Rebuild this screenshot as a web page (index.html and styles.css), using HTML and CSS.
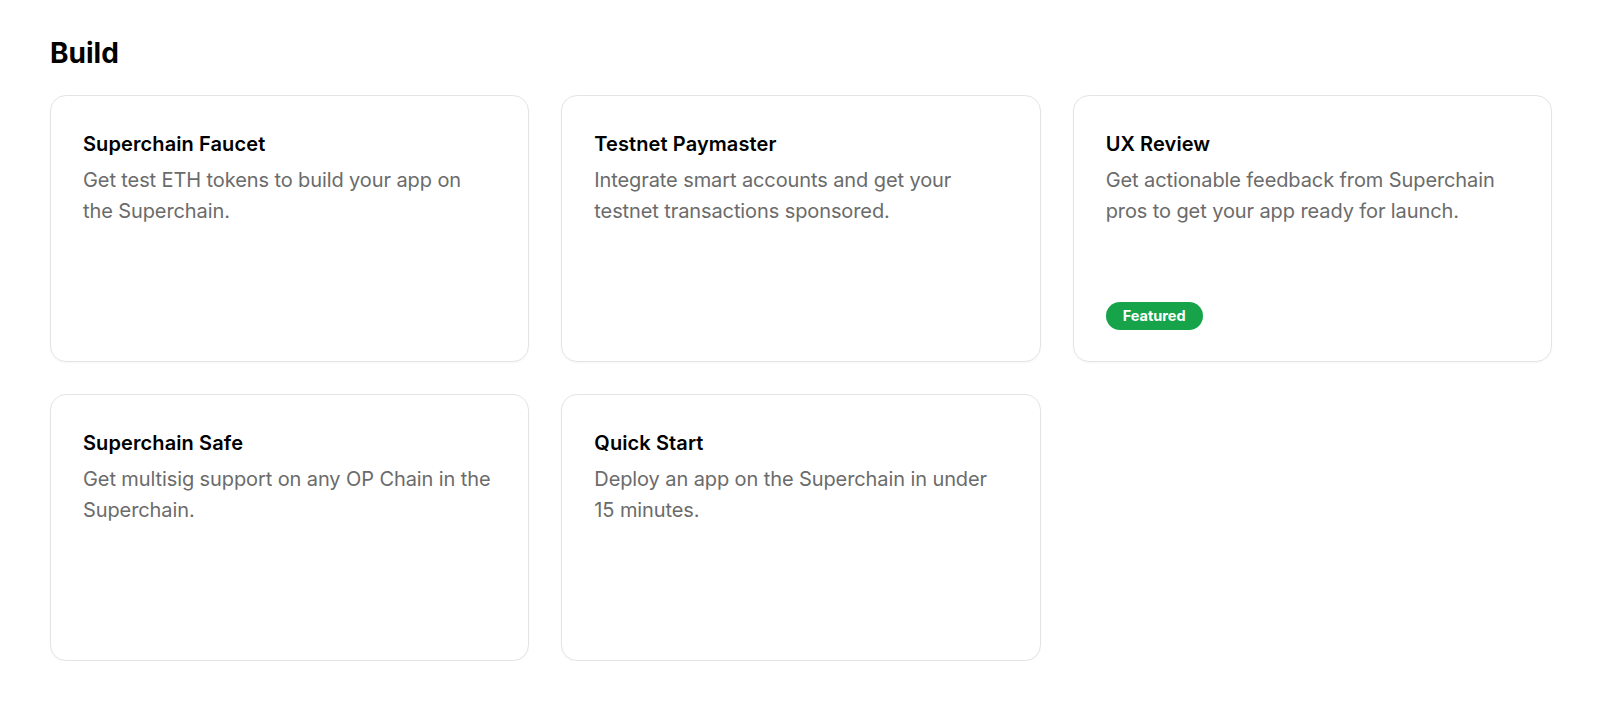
FILE: index.html
```html
<!DOCTYPE html>
<html>
<head>
<meta charset="utf-8">
<link rel="stylesheet" href="styles.css">
</head>
<body>
<main class="page">
  <h1 class="heading">Build</h1>
  <div class="grid">
    <div class="card">
      <div class="title">Superchain Faucet</div>
      <p class="desc">Get test ETH tokens to build your app on the Superchain.</p>
    </div>
    <div class="card">
      <div class="title">Testnet Paymaster</div>
      <p class="desc">Integrate smart accounts and get your testnet transactions sponsored.</p>
    </div>
    <div class="card">
      <div class="title">UX Review</div>
      <p class="desc">Get actionable feedback from Superchain pros to get your app ready for launch.</p>
      <span class="badge">Featured</span>
    </div>
    <div class="card">
      <div class="title">Superchain Safe</div>
      <p class="desc">Get multisig support on any OP Chain in the Superchain.</p>
    </div>
    <div class="card">
      <div class="title">Quick Start</div>
      <p class="desc">Deploy an app on the Superchain in under 15 minutes.</p>
    </div>
  </div>
</main>
</body>
</html>
```

FILE: styles.css
```css
html, body {
  margin: 0;
  padding: 0;
  background: #ffffff;
}
body {
  font-family: Inter, "Noto Sans", "Liberation Sans", sans-serif;
  color: #000;
}
.page {
  padding: 35px 48px 0 50px;
}
.heading {
  margin: 0;
  font-size: 28px;
  line-height: 36px;
  font-weight: 700;
  letter-spacing: 0;
}
.grid {
  margin-top: 24px;
  display: grid;
  grid-template-columns: repeat(3, 1fr);
  gap: 32px;
}
.card {
  box-sizing: border-box;
  height: 267px;
  border: 1px solid #e4e4e4;
  border-radius: 16px;
  box-shadow: 0 1px 2px rgba(0,0,0,0.04);
  padding: 32px 34px 31px 32px;
  display: flex;
  flex-direction: column;
  align-items: flex-start;
}
.title {
  font-size: 20px;
  line-height: 32px;
  font-weight: 600;
  letter-spacing: 0.1px;
}
.desc {
  margin: 5px 0 0;
  font-size: 20px;
  line-height: 30.5px;
  color: #6b6b6b;
  letter-spacing: -0.1px;
}
.badge {
  margin-top: auto;
  background: #16a34a;
  color: #fff;
  font-size: 14.5px;
  font-weight: 700;
  line-height: 28px;
  padding: 0 17px;
  border-radius: 14px;
}
```
